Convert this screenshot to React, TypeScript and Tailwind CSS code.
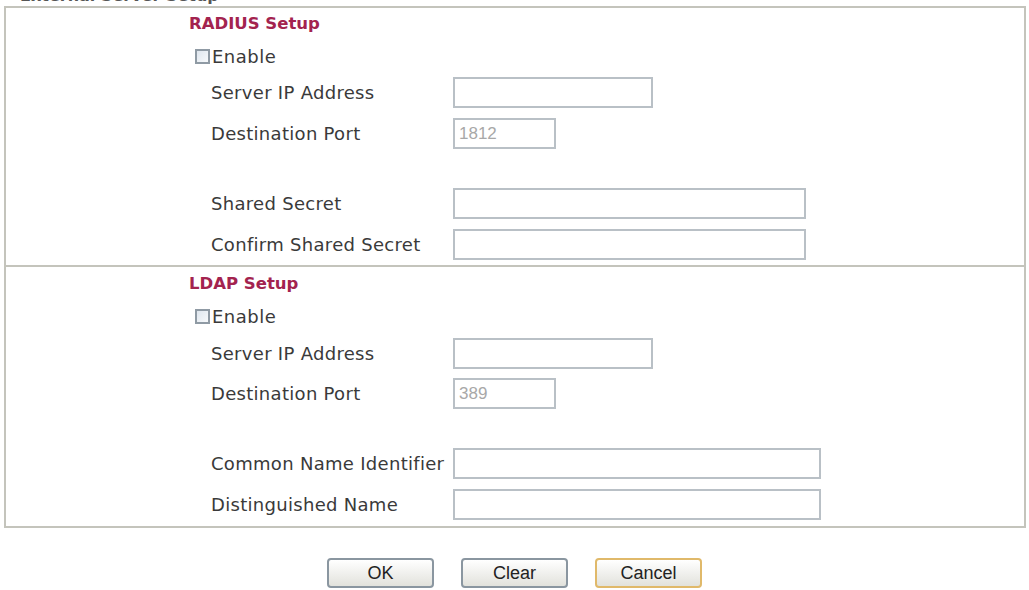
import React from "react";

const labelFont = { fontFamily: '"DejaVu Sans", Verdana, sans-serif' };

function Field({
  label,
  width,
  value,
  className = "",
}: {
  label: string;
  width: string;
  value?: string;
  className?: string;
}) {
  return (
    <div className={`flex items-center h-[31px] ${className}`}>
      <div className="w-[264px] pl-[22px] text-[18px] text-[#3a3a3a] tracking-[0.3px] whitespace-nowrap">{label}</div>
      <div
        className={`${width} h-[31px] border-2 border-[#b9c0c6] bg-white flex items-center pl-[4px] text-[17px] text-[#a8a8a8] font-['Liberation_Sans',Arial,sans-serif]`}
      >
        {value}
      </div>
    </div>
  );
}

function Enable() {
  return (
    <div className="flex items-center gap-[2px] pl-[6px]">
      <div className="w-[15px] h-[15px] border-2 border-[#8f9aa4] bg-gradient-to-br from-[#dfe6ee] to-[#f7f9fb]" />
      <span className="text-[18px] text-[#3a3a3a] tracking-[0.5px]">Enable</span>
    </div>
  );
}

export default function App() {
  return (
    <div className="w-[1029px] h-[590px] bg-white overflow-hidden relative" style={labelFont}>
      <div className="absolute left-[20px] top-[-16px] text-[16px] font-bold text-[#555]">
        External Server Setup
      </div>
      <div className="pt-[6px] pl-[4px] pr-[3px]">
        <div className="border-2 border-[#c4c4bc] pl-[183px]">
          <div className="flex flex-col pb-[5px]">
            <div className="h-[32px] flex items-center text-[16.5px] font-bold text-[#a3234f]">RADIUS Setup</div>
            <div className="h-[32px] flex items-center">
              <Enable />
            </div>
            <Field label="Server IP Address" width="w-[200px]" className="mt-[5px]" />
            <Field label="Destination Port" width="w-[103px]" value="1812" className="mt-[10px]" />
            <Field label="Shared Secret" width="w-[353px]" className="mt-[39px]" />
            <Field label="Confirm Shared Secret" width="w-[353px]" className="mt-[10px]" />
          </div>
          <div className="border-t-2 border-[#c4c4bc] -ml-[183px]" />
          <div className="flex flex-col pb-[6px]">
            <div className="h-[34px] flex items-center text-[16.5px] font-bold text-[#a3234f]">LDAP Setup</div>
            <div className="h-[30px] flex items-center">
              <Enable />
            </div>
            <Field label="Server IP Address" width="w-[200px]" className="mt-[7px]" />
            <Field label="Destination Port" width="w-[103px]" value="389" className="mt-[9px]" />
            <Field label="Common Name Identifier" width="w-[368px]" className="mt-[39px]" />
            <Field label="Distinguished Name" width="w-[368px]" className="mt-[10px]" />
          </div>
        </div>
      </div>
      <div className="flex justify-center gap-[27px] mt-[30px] font-['Liberation_Sans',Arial,sans-serif]">
        {["OK", "Clear", "Cancel"].map((t) => (
          <div
            key={t}
            className={`w-[107px] h-[30px] rounded-[4px] border-2 flex items-center justify-center text-[18px] text-[#222] bg-gradient-to-b from-white to-[#e2e2dc] ${
              t === "Cancel" ? "border-[#e0b96a]" : "border-[#8a96a0]"
            }`}
          >
            {t}
          </div>
        ))}
      </div>
    </div>
  );
}
